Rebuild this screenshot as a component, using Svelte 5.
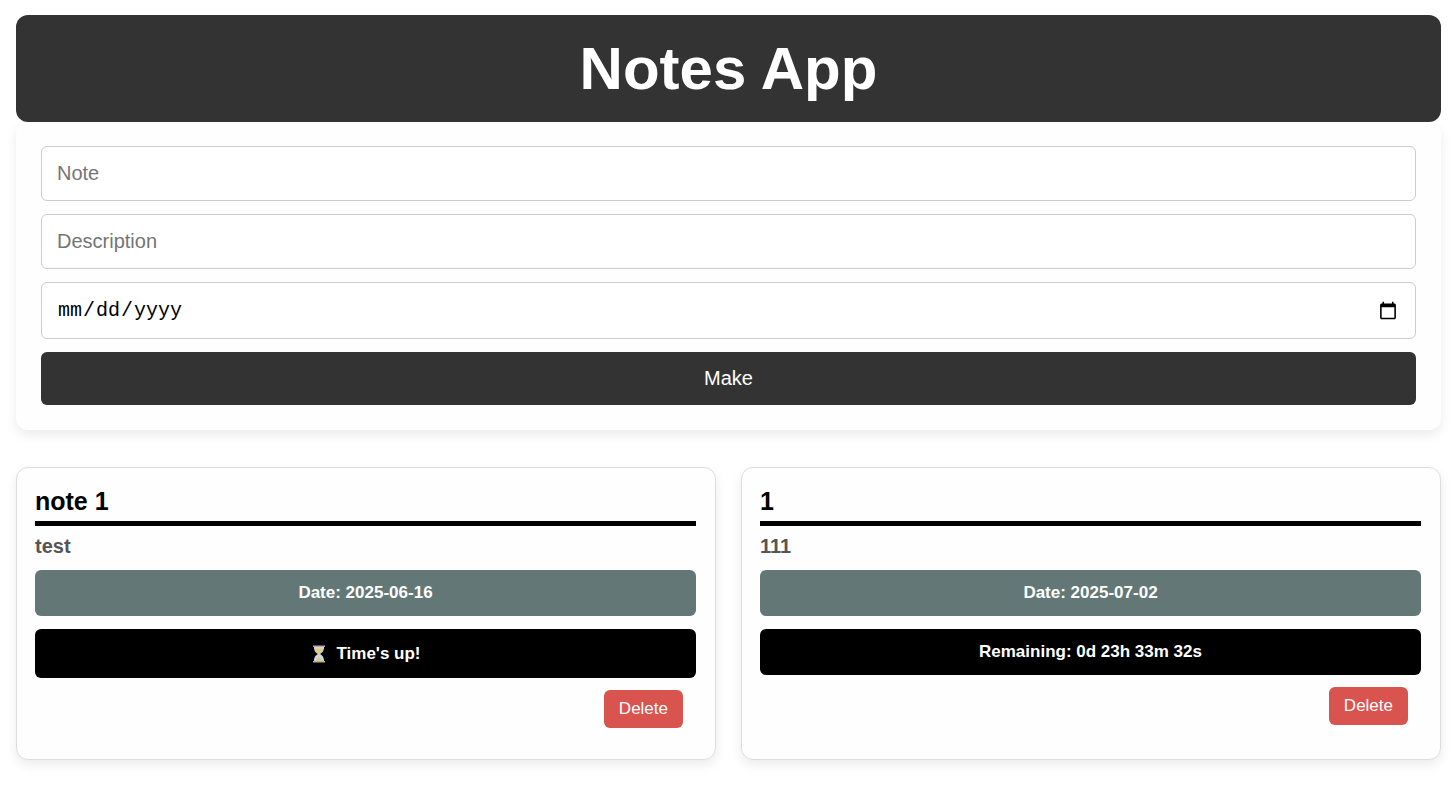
<script>
  let title = $state('');
  let description = $state('');
  let date = $state('');
  let notes = $state([
    { id: 1, title: 'note 1', description: 'test', date: '2025-06-16', expired: true, status: "Time's up!" },
    { id: 2, title: '1', description: '111', date: '2025-07-02', expired: false, status: 'Remaining: 0d 23h 33m 32s' }
  ]);

  function add(event) {
    event.preventDefault();
    if (!title || !date) return;
    const left = Math.floor((new Date(date).getTime() - Date.now()) / 1000);
    const status =
      left <= 0
        ? "Time's up!"
        : `Remaining: ${Math.floor(left / 86400)}d ${Math.floor(left / 3600) % 24}h ${Math.floor(left / 60) % 60}m ${left % 60}s`;
    notes.push({ id: Date.now(), title, description, date, expired: left <= 0, status });
    title = description = date = '';
  }

  function remove(id) {
    notes = notes.filter((note) => note.id !== id);
  }
</script>

<div class="page">
  <header><h1>Notes App</h1></header>

  <form onsubmit={add}>
    <input type="text" placeholder="Note" aria-label="Note" bind:value={title} />
    <input type="text" placeholder="Description" aria-label="Description" bind:value={description} />
    <input type="date" aria-label="Date" bind:value={date} />
    <button class="make" type="submit">Make</button>
  </form>

  <main>
    {#each notes as note (note.id)}
      <article>
        <h2>{note.title}</h2>
        <p class="description">{note.description}</p>
        <p class="bar date">Date: {note.date}</p>
        <p class="bar status" class:expired={note.expired}>
          {#if note.expired}
            <svg viewBox="-2 0 18 18" width="18" height="18" aria-hidden="true">
              <path d="M2 2h10c0 4-1.500 5.500-4 7 2.500 1.500 4 3 4 7H2c0-4 1.500-5.500 4-7C3.500 7.500 2 6 2 2z" fill="#c3dcea" />
              <path d="M3 3.800h8C10.600 6.300 9 7.300 7.300 8.600v4L11 15.800H3l3.700-3.200v-4C5 7.300 3.400 6.300 3 3.800z" fill="#edc56b" />
              <path d="M1 .500h12v1.500H1zM1 16h12v1.500H1z" fill="#b9a9a0" />
            </svg>
          {/if}
          <span>{note.status}</span>
        </p>
        <button class="delete" type="button" onclick={() => remove(note.id)}>Delete</button>
      </article>
    {/each}
  </main>
</div>

<style>
  :global(body) {
    margin: 0;
    background: #fff;
  }

  .page {
    padding: 15px 15px 40px 16px;
    font-family: "Liberation Sans", Arial, sans-serif;
  }

  header {
    position: relative;
    padding: 19px;
    border-radius: 12px;
    background: #333;
    color: #fff;
    text-align: center;
  }

  h1 {
    margin: 0;
    font-size: 60px;
    line-height: 69px;
  }

  form {
    display: flex;
    flex-direction: column;
    gap: 13px;
    padding: 24px 25px 25px;
    border-radius: 12px;
    box-shadow: 0 5px 12px rgba(0, 0, 0, 0.08);
    background: #fefefe;
  }

  input {
    box-sizing: border-box;
    width: 100%;
    height: 55px;
    margin: 0;
    padding: 0 15px;
    border: 1px solid #ccc;
    border-radius: 6px;
    background: #fff;
    color: #000;
    font-family: inherit;
    font-size: 20px;
  }

  input::placeholder {
    color: #757575;
  }

  input[type="date"] {
    height: 57px;
    font-family: "Liberation Mono", "Courier New", monospace;
  }

  button {
    border: 0;
    border-radius: 6px;
    color: #fff;
    font-family: inherit;
    cursor: pointer;
  }

  .make {
    height: 53px;
    background: #333;
    font-size: 20px;
  }

  main {
    display: grid;
    grid-template-columns: repeat(auto-fill, minmax(400px, 1fr));
    gap: 25px;
    margin-top: 37px;
  }

  @media (min-width: 1000px) {
    main {
      grid-template-columns: 1fr 1fr;
    }
  }

  article {
    display: flex;
    flex-direction: column;
    padding: 18px 19px 31px 18px;
    border: 1px solid #ddd;
    border-radius: 12px;
    background: #fefefe;
    box-shadow: 0 5px 12px rgba(0, 0, 0, 0.08);
  }

  h2 {
    margin: 0;
    padding-bottom: 5px;
    border-bottom: 5px solid #000;
    font-size: 25px;
    line-height: 30px;
  }

  p {
    margin: 0;
    font-weight: bold;
  }

  .description {
    padding: 8px 0 12px;
    color: #555;
    font-size: 20px;
    line-height: 24px;
  }

  .bar {
    display: flex;
    justify-content: center;
    align-items: center;
    gap: 8px;
    height: 46px;
    margin-bottom: 13px;
    border-radius: 6px;
    color: #fff;
    font-size: 17px;
  }

  .date {
    background: #637876;
  }

  .status {
    margin-bottom: 12px;
    background: #000;
  }

  .expired {
    height: 49px;
  }

  .delete {
    align-self: flex-end;
    height: 38px;
    margin-right: 13px;
    padding: 0 15px;
    background: #d9534f;
    font-size: 17px;
  }
</style>
